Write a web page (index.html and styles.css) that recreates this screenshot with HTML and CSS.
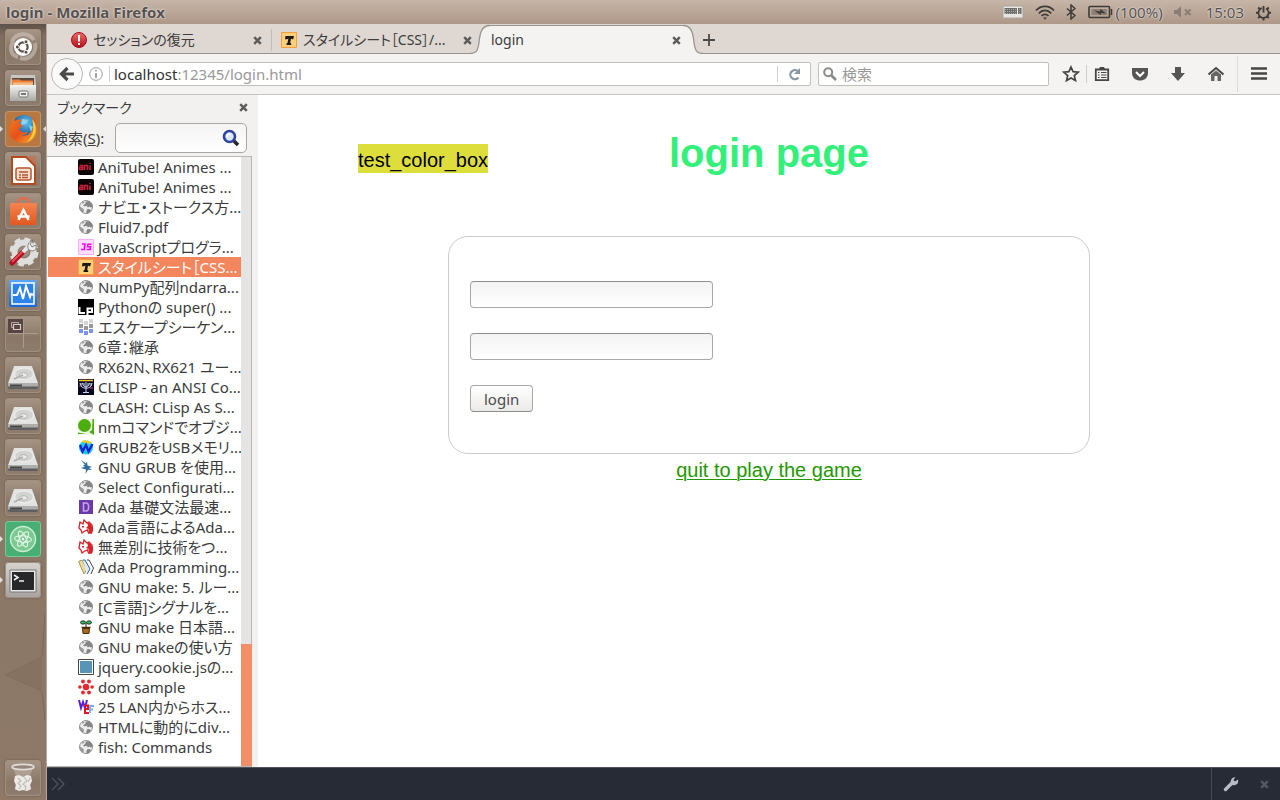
FILE: index.html
```
<!DOCTYPE html>
<html lang="ja">
<head>
<meta charset="utf-8">
<title>login</title>
<link rel="stylesheet" href="styles.css">
</head>
<body>
<svg class="defs" aria-hidden="true">
  <defs>
    <linearGradient id="g-red" x1="0" y1="0" x2="0" y2="1"><stop offset="0" stop-color="#f0706a"/><stop offset="1" stop-color="#b00c1c"/></linearGradient>
    <linearGradient id="g-metal" x1="0" y1="0" x2="0" y2="1"><stop offset="0" stop-color="#f4f4f2"/><stop offset="1" stop-color="#a9a8a5"/></linearGradient>
    <linearGradient id="g-blue" x1="0" y1="0" x2="0" y2="1"><stop offset="0" stop-color="#5aa5f5"/><stop offset="1" stop-color="#1667d8"/></linearGradient>
    <linearGradient id="g-fox" x1="0" y1="0" x2="1" y2="1"><stop offset="0" stop-color="#f07c1c"/><stop offset=".5" stop-color="#e8501c"/><stop offset="1" stop-color="#f7b32c"/></linearGradient>
    <radialGradient id="g-globe" cx=".6" cy=".3" r=".7"><stop offset="0" stop-color="#5cc3ee"/><stop offset="1" stop-color="#123a80"/></radialGradient>
    <linearGradient id="g-bag" x1="0" y1="0" x2="0" y2="1"><stop offset="0" stop-color="#f58450"/><stop offset="1" stop-color="#e2581f"/></linearGradient>
  </defs>
  <symbol id="globe" viewBox="0 0 16 16"><circle cx="8" cy="8" r="6.500" fill="#ededed" stroke="#909090"/><path d="M8 2.500l3-.5c2 1 3.500 3 3.700 5L13 8.800l-1.500-1.300L10 8.600 8.600 6.800 6.500 7.500 5 6.500l2-1.500z" fill="#858585"/><path d="M9.500 10l2.500.2 1 1.300-2.500 2.700-1.800.2-.4-2z" fill="#858585"/><path d="M1.600 7.500L3.500 8.500l2 1.500.5 2-1 2C3 13 1.500 10.500 1.600 7.500zM4 3.500l2-1 .5 1L4.500 5z" fill="#9a9a9a"/></symbol>
  <symbol id="ani" viewBox="0 0 16 16"><rect width="16" height="16" rx="2" fill="#0c0507"/><path d="M1.500 6.500h3v4h-3v-2h3M6.500 11V6.500h3V11M12 6.500V11M12 4v1" fill="none" stroke="#c8203c" stroke-width="1.600"/></symbol>
  <symbol id="js" viewBox="0 0 16 16"><path d="M.5.500h15v15H.500z" fill="#fdf" stroke="#f9aef9"/><path d="M4 5h3L6.200 10.500H3M13.500 5.200H10L9.600 7.800h3l-.5 2.700H8.600" fill="none" stroke="#f0f" stroke-width="1.600"/></symbol>
  <symbol id="tag" viewBox="0 0 16 16"><path d="M.5.500h15v15H.500z" fill="#ffd07a" stroke="#fb9d3d"/><path d="M4.500 4h8.500l-.8 3.200h-1L10 6.500 9.200 11l1 .5V13H5.500v-1.500l1-.5.900-4.500-1.400.7H4z" fill="#191714"/></symbol>
  <symbol id="lp" viewBox="0 0 16 16"><path d="M0 0h16v16H0z" fill="#000"/><path d="M1.500 8v6H7M9.500 16V9.500h4.500V13H9.500" fill="none" stroke="#fff" stroke-width="2"/></symbol>
  <symbol id="blocks" viewBox="0 0 16 16"><path d="M1 0h4v4H1zM6 2h4v4H6zM11 0h4v4h-4z" fill="#d4d4d4"/><path d="M1 5h4v4H1zM6 7h4v4H6zM11 5h4v4h-4z" fill="#999"/><path d="M1 10h4v4H1zM6 12h4v4H6zM11 10h4v4h-4z" fill="#7c92fb"/></symbol>
  <symbol id="clisp" viewBox="0 0 16 16"><path d="M0 0h16v16H0z" fill="#070720"/><path d="M1 1.500h14" stroke="#fc3" stroke-width="1.500"/><path d="M2 4c0 7 12 7 12 0M4.500 4c0 5 7 5 7 0M8 3v10M5 13.500h6" fill="none" stroke="#cdd6f4"/><path d="M3 4v3M6 4v3M10 4v3M13 4v3" stroke="#cdd6f4"/><path d="M1 7h2M12 9h3" stroke="#e04050"/></symbol>
  <symbol id="qiita" viewBox="0 0 16 16"><path d="M0 0h16v16H0z" fill="#eef8e5"/><circle cx="6.500" cy="6.500" r="6.500" fill="#4cae0e"/><path d="M14.500 0H16v16l-5-3 3-2zM0 13.500l8 1.500H0z" fill="#4cae0e"/></symbol>
  <symbol id="wglobe" viewBox="0 0 16 16"><circle cx="8" cy="8.500" r="7" fill="#19c7fb"/><path d="M3 3l3-2 5 1 3 1-3 2z" fill="#e6d22d"/><path d="M2 6l2.500 6.500L8 6l2.500 6.500L14.500 5" fill="none" stroke="#1620d0" stroke-width="2.200"/></symbol>
  <symbol id="bolt" viewBox="0 0 16 16"><path d="M3 1l5 3.500 1-2 .5 4L14 8l-3 1 3 2-4-.2L7.500 15 8 10.500 3 9l4-1.500L4.500 6 7 6z" fill="#2f6f9e"/></symbol>
  <symbol id="dpurple" viewBox="0 0 16 16"><path d="M1 1h14v14H1z" fill="#6a3aab"/><path d="M5.500 4v8H8c3.500 0 3.500-8 0-8z" fill="none" stroke="#c9a5ea" stroke-width="1.500"/></symbol>
  <symbol id="fox" viewBox="0 0 16 16"><path d="M2 3l3 2 1-4 3 3 2-1 3 3 .5 4-1 4h-3l-1-3-3.500 1.500L4 14l-1-3-2-2z" fill="#fff" stroke="#d8232a" stroke-width="1.300"/><path d="M9 3l4 2 2 5-1 4h-3l-.5-4-2.500-1 2-2z" fill="#d8232a"/><path d="M4 7h2v1.500H4z" fill="#d8232a"/></symbol>
  <symbol id="books" viewBox="0 0 16 16"><path d="M.5 2.500L4 1l5 9-3 5z" fill="#ead9a0" stroke="#a6945a"/><path d="M5 1h2l5 9-3 5" fill="#dceaff" stroke="#2b5fa8"/><path d="M9 1h2l4.500 8L13 15" fill="none" stroke="#3a4350"/></symbol>
  <symbol id="plant" viewBox="0 0 16 16"><path d="M4.500 9.500h7l-.5 5H5z" fill="#a86a1d" stroke="#4d2d08"/><path d="M3.500 8.500h9" stroke="#4d2d08" stroke-width="1.500"/><path d="M8 8V4" stroke="#222"/><ellipse cx="5" cy="3.500" rx="2.500" ry="1.600" fill="#24c853" stroke="#222"/><ellipse cx="11" cy="3.500" rx="2.500" ry="1.600" fill="#24c853" stroke="#222"/></symbol>
  <symbol id="square" viewBox="0 0 16 16"><path d="M.5.500h15v15H.500z" fill="#fff" stroke="#444"/><path d="M2 2h12v12H2z" fill="#5794b5"/></symbol>
  <symbol id="dots" viewBox="0 0 16 16"><g fill="#ef2529"><circle cx="8" cy="8" r="3.200"/><circle cx="5" cy="2.500" r="1.900"/><circle cx="11" cy="2.500" r="1.900"/><circle cx="1.900" cy="8" r="1.800"/><circle cx="14.100" cy="8" r="1.800"/><circle cx="5" cy="13.500" r="1.900"/><circle cx="11" cy="13.500" r="1.900"/></g></symbol>
  <symbol id="w2f" viewBox="0 0 16 16"><path d="M1 1l2 8 2-6 2 6 2-8" fill="none" stroke="#5a20d8" stroke-width="2"/><path d="M6 6.500h4V10H7v4h4" fill="none" stroke="#e3161f" stroke-width="2"/><path d="M12 14V7h4M12 10.500h3" fill="none" stroke="#86aef0" stroke-width="2"/></symbol>
  <symbol id="x" viewBox="0 0 10 10"><path d="M2 2l6 6M8 2L2 8" stroke="currentColor" stroke-width="2.300"/></symbol>
  <symbol id="drive" viewBox="0 0 36 36"><path d="M9 9h18l6 16v5q0 2-2 2H5q-2 0-2-2v-5z" fill="#5f5f61"/><path d="M9 9h18l6 17H3z" fill="#e2e2e0"/><path d="M3 26h30v3.500H3z" fill="#aeaeac"/><path d="M5 28.500h12" stroke="#444" stroke-width="2"/><ellipse cx="19" cy="17" rx="9.500" ry="6" fill="#d3d3d1" stroke="#f3f3f2"/><ellipse cx="18.500" cy="18" rx="4" ry="2.300" fill="#ececeb" stroke="#b3b3b1"/><path d="M9 22l9-4" stroke="#aeaeac" stroke-width="1.500"/></symbol>
</svg>

<header class="panel">
  <span class="panel-title">login - Mozilla Firefox</span>
  <div class="indicators">
    <svg width="22" height="14" viewBox="0 0 22 14"><path d="M1 1h20v12H1z" fill="#e6e5e2" stroke="#aaa49e"/><path d="M2.500 3h17v6h-17z" fill="#6e6e68"/><path d="M3 4.500h16M3 6.500h16M3 8.500h16" stroke="#aaa" stroke-dasharray="1 1"/><path d="M15.500 3v7" stroke="#eee"/></svg>
    <svg width="20" height="15" viewBox="0 0 20 15"><path d="M1 5.500c5-5.500 13-5.500 18 0M3.800 8.300c3.500-3.800 8.900-3.800 12.400 0M6.500 11c2-2.200 5-2.200 7 0" fill="none" stroke="#3f3b38" stroke-width="1.700"/><path d="M8 12.500h4L10 14.800z" fill="#3f3b38"/></svg>
    <svg class="bt" width="10" height="16" viewBox="0 0 10 16"><path d="M1 4.500l8 7L5 15V1l4 3.500-8 7" fill="none" stroke="#3f3b38" stroke-width="1.500"/></svg>
    <span class="battery"><svg width="25" height="14" viewBox="0 0 25 14"><rect x="1" y="1.500" width="20.500" height="11" rx="1" fill="none" stroke="#3f3b38" stroke-width="1.600"/><path d="M3.500 4h15.500v6H3.500z" fill="#8e8177"/><path d="M6 5.500l6 1 .5-2.500 5.500 4.500-5-.5-.5 2z" fill="#3f3b38"/><path d="M23.500 4v6" stroke="#3f3b38" stroke-width="1.500"/></svg>(100%)</span>
    <svg class="mute" width="18" height="12" viewBox="0 0 18 12"><path d="M0 4h3l4-4v12L3 8H0z" fill="#8a7d73"/><path d="M11 3.500l5.500 5.500M16.500 3.500L11 9" stroke="#8a7d73" stroke-width="2"/></svg>
    <span>15:03</span>
    <svg width="17" height="17" viewBox="0 0 17 17"><circle cx="8.500" cy="8.800" r="5" fill="none" stroke="#3f3b38" stroke-width="1.800" stroke-dasharray="26.400 5" transform="rotate(-61 8.500 8.800)"/><path d="M8.500 2v6.500M1 8.800h2.500M13.500 8.800H16M8.500 14v2.500M3.200 3.500l1.700 1.700M13.800 3.500l-1.700 1.700M3.200 14l1.700-1.700M13.800 14l-1.700-1.700" stroke="#3f3b38" stroke-width="1.900"/></svg>
  </div>
</header>

<div class="desktop">
  <nav class="launcher" aria-label="Launcher">
    <button class="tile" aria-label="Dash"><svg viewBox="0 0 36 36"><path d="M7 13C10 4 23 2 29 11M30 14c2 10-6 18-15 15M13 28C5 26 4 18 9 12" fill="none" stroke="#d5cbc2" stroke-width="4" opacity=".55"/><circle cx="18" cy="18" r="9" fill="#fff"/><circle cx="18" cy="18" r="4.600" fill="none" stroke="#5b4c40" stroke-width="2.200"/><g fill="#5b4c40" stroke="#fff"><circle cx="12.300" cy="18" r="2"/><circle cx="21" cy="12.800" r="2"/><circle cx="21" cy="23.200" r="2"/></g></svg></button>
    <button class="tile" aria-label="Files"><svg viewBox="0 0 36 36"><path d="M6 5h24l1 10H5z" fill="#c9c6c1"/><path d="M7 8h22v8H7z" fill="#5b4a40"/><path d="M7 9.500h8l1 1h12v6H7z" fill="#f1803a"/><path d="M8 12.500h20v4H8z" fill="#f8ba83"/><path d="M5 15h26v16H5z" fill="url(#g-metal)"/><rect x="14" y="21" width="9" height="6" rx="1" fill="#eee" stroke="#777"/><path d="M16 24h5" stroke="#777" stroke-width="2"/></svg></button>
    <button class="tile active" aria-label="Firefox"><svg viewBox="0 0 36 36"><circle cx="19" cy="16.500" r="12.500" fill="url(#g-globe)"/><path d="M17 8l6 1-2 4-5 1zM24 14l4 2-2 5z" fill="#8cd4f1"/><path d="M8 6l-1 5C1 19 5 31 17 32c11 1 17-9 14-20-1-3-3-5-5-6 3 4 3 7 2 10-1 6-6 10-11 8 3 0 5-1 6-3-4 1-8 0-9-3 1-2 3-2 4-3l-4-3 3-3c-3-1-6 0-7 1z" fill="url(#g-fox)"/><path d="M27 8c7 8 4 19-5 23 6-6 8-13 5-23z" fill="#ffd33c"/></svg></button>
    <button class="tile" aria-label="Impress"><svg viewBox="0 0 36 36"><path d="M7 5h14l9 9v18H7z" fill="#fff" stroke="#b34a1d" stroke-width="2"/><path d="M22 4h9v9z" fill="#c86e4b" opacity=".7"/><rect x="11" y="16" width="15" height="12" rx="2" fill="#f5ddd0" stroke="#b8562a" stroke-width="1.500"/><path d="M14 20h9M17 23h6M17 25.500h6M14 23h2M14 25.500h2" stroke="#b8562a" stroke-width="1.600"/></svg></button>
    <button class="tile" aria-label="Software"><svg viewBox="0 0 36 36"><path d="M13 14V9c0-5 11-5 11 0v5" fill="none" stroke="#e36b4a" stroke-width="2.500"/><path d="M5 10h27l-1 22H5z" fill="url(#g-bag)"/><path d="M13.500 27l5-10 5 10M12.500 23.500h12" fill="none" stroke="#fff" stroke-width="2.400"/></svg></button>
    <button class="tile" aria-label="Settings"><svg viewBox="0 0 36 36"><circle cx="19" cy="18" r="9.500" fill="none" stroke="#dededc" stroke-width="6"/><circle cx="19" cy="18" r="13" fill="none" stroke="#dededc" stroke-width="3" stroke-dasharray="6 4.210"/><circle cx="19" cy="18" r="5" fill="#9b9089"/><path d="M7 29l12-12" stroke="#b00f20" stroke-width="5" stroke-linecap="round"/><path d="M7 28l11-11" stroke="#ee4a52" stroke-width="2"/><path d="M18 18l7-7" stroke="#e8e8e8" stroke-width="4"/><path d="M28 6l-3 4 2 3 4-2c1 6-3 7-7 5-3-4 0-9 4-10z" fill="#eee" stroke="#666" stroke-width=".8"/></svg></button>
    <button class="tile" aria-label="System Monitor"><svg viewBox="0 0 36 36"><rect x="4" y="5" width="28" height="27" rx="2" fill="url(#g-blue)"/><path d="M7 8h22v21H7z" fill="#2b82ec" stroke="#fff" stroke-width="1.500"/><path d="M8 20h4l3-7 3 11 3-13 4 11 1-3 3 1" fill="none" stroke="#fff" stroke-width="2"/></svg></button>
    <button class="tile" aria-label="Workspaces"><svg viewBox="0 0 36 36"><path d="M3 3h15v14H3z" fill="#594441"/><path d="M18.500 3v29M3 17.500h30" stroke="#a99c90"/><path d="M6.500 6.500h7v5h-7z" fill="none" stroke="#b7aba5"/><path d="M8.500 8.500h7v5h-7z" fill="#594441" stroke="#d3cbc6" stroke-width="1.200"/></svg></button>
    <button class="tile" aria-label="Volume 1"><svg><use href="#drive"/></svg></button>
    <button class="tile" aria-label="Volume 2"><svg><use href="#drive"/></svg></button>
    <button class="tile" aria-label="Volume 3"><svg><use href="#drive"/></svg></button>
    <button class="tile" aria-label="Volume 4"><svg><use href="#drive"/></svg></button>
    <button class="tile atom" aria-label="Atom"><svg viewBox="0 0 36 36"><circle cx="18" cy="18" r="12.500" fill="#7cc891" stroke="#c9ecd2" stroke-width="1.500"/><g fill="none" stroke="#e2f6e6" stroke-width="1.100"><ellipse cx="18" cy="18" rx="3.200" ry="8.500" transform="rotate(-25 18 18)"/><ellipse cx="18" cy="18" rx="3.200" ry="8.500" transform="rotate(35 18 18)"/><ellipse cx="18" cy="18" rx="3.200" ry="8.500" transform="rotate(95 18 18)"/></g><circle cx="18" cy="18" r="1.200" fill="#fff"/></svg></button>
    <button class="tile term" aria-label="Terminal"><svg viewBox="0 0 36 36"><path d="M5 8h26v22H5z" fill="#e8e8e8" stroke="#777"/><path d="M7 10h22v18H7z" fill="#26282a"/><path d="M9 13l4 2.500L9 18M14 19h5" fill="none" stroke="#eee" stroke-width="1.600"/></svg></button>
    <svg class="fold" viewBox="0 0 40 110"><path d="M40 0l-3 44L1 62l36 16 3 30" fill="none" stroke="#7d685a"/><path d="M37 44L1 62l36 16z" fill="#857261"/></svg>
    <button class="tile trash" aria-label="Trash"><svg viewBox="0 0 36 36"><path d="M8 8l3 8-1 14h16l-1-14 3-8z" fill="#b7aaa0" opacity=".7"/><path d="M10 16l4-1 4 2 4-2 4 1 1 5-2 4 1 4-4 2-4-1-4 1-4-2 1-4-2-4z" fill="#eceae6"/><path d="M13 18l3 3-3 2 3 3-2 3M19 17l3 4-4 3 3 3-1 3M25 18l-2 4" fill="none" stroke="#bdb8b2" stroke-width="1.100"/><ellipse cx="18" cy="7" rx="11" ry="2.600" fill="#94867c" stroke="#e0dbd6" stroke-width="1.700"/></svg></button>
  </nav>

  <div class="window">
    <div class="tabs">
      <div class="tab"><svg width="16" height="16" viewBox="0 0 16 16"><circle cx="8" cy="8" r="7.500" fill="url(#g-red)" stroke="#a80f1f"/><path d="M8 3v6.500M8 11v2" stroke="#fff" stroke-width="2"/></svg><span class="tab-name">セッションの復元</span><button class="close" aria-label="Close tab"><svg><use href="#x"/></svg></button></div>
      <div class="tab second"><svg width="16" height="16"><use href="#tag"/></svg><span class="tab-name">スタイルシート［CSS］/...</span><button class="close" aria-label="Close tab"><svg><use href="#x"/></svg></button></div>
      <div class="tab-current">
        <svg width="20" height="30" viewBox="0 0 20 30"><path d="M0 30v-.5c7 0 8-4 9-11C10 8 12 1.500 20 1.500V30z" fill="#f4f3f1"/><path d="M0 29.500c7 0 8-4 9-11C10 8 12 1.500 20 1.500" fill="none" stroke="#979490" stroke-width="1.300"/></svg>
        <div class="tab-body"><span class="tab-name">login</span><button class="close" aria-label="Close tab"><svg><use href="#x"/></svg></button></div>
        <svg width="20" height="30" viewBox="0 0 20 30"><path d="M20 30v-.5c-7 0-8-4-9-11C10 8 8 1.500 0 1.500V30z" fill="#f4f3f1"/><path d="M20 29.500c-7 0-8-4-9-11C10 8 8 1.500 0 1.500" fill="none" stroke="#979490" stroke-width="1.300"/></svg>
      </div>
      <button class="new-tab" aria-label="New tab"><svg width="12" height="12" viewBox="0 0 12 12"><path d="M6 0v12M0 6h12" stroke="#4a4a48" stroke-width="1.800"/></svg></button>
    </div>

    <div class="toolbar">
      <button class="back" aria-label="Back"><svg width="16" height="16" viewBox="0 0 16 16"><path d="M8.500 2L2.500 8l6 6M2.500 8H15" fill="none" stroke="#4a4a48" stroke-width="3.200"/></svg></button>
      <div class="urlbar">
        <svg width="14" height="14" viewBox="0 0 14 14"><circle cx="7" cy="7" r="6.300" fill="none" stroke="#9b9b99"/><path d="M7 6v5M7 3v1.500" stroke="#888" stroke-width="1.500"/></svg>
        <div class="url"><b>localhost</b>:12345/login.html</div>
        <button class="reload" aria-label="Reload"><svg width="13" height="13" viewBox="0 0 13 13"><path d="M10.500 9.500A4.600 4.600 0 1 1 9.800 3" fill="none" stroke="#8797a6" stroke-width="2.200"/><path d="M12 0v6H6z" fill="#8797a6"/></svg></button>
      </div>
      <label class="searchbar"><svg width="14" height="14" viewBox="0 0 14 14"><circle cx="5.200" cy="5.200" r="4" fill="none" stroke="#8b8b89" stroke-width="2"/><path d="M8 8l5 5" stroke="#8b8b89" stroke-width="2.600"/></svg><input type="text" placeholder="検索" aria-label="検索"></label>
      <div class="tools">
        <button aria-label="Bookmark"><svg viewBox="0 0 18 18"><path d="M9 2l2.100 4.700 5.100.5-3.900 3.400 1.200 5L9 13l-4.500 2.600 1.200-5L1.800 7.200l5.100-.5z" fill="none" stroke="#464644" stroke-width="1.700"/></svg></button>
        <i class="rule"></i>
        <button aria-label="Bookmarks list"><svg viewBox="0 0 18 18"><path d="M2.800 4.500h12.400v10.700H2.800z" fill="#f4f3f1" stroke="#464644" stroke-width="1.800"/><path d="M6 4l1-2h4l1 2z" fill="#464644"/><path d="M5 7.500h1.500M8 7.500h5.500M5 10h1.500M8 10h5.500M5 12.500h1.500M8 12.500h5.500" stroke="#464644" stroke-width="1.200"/></svg></button>
        <button aria-label="Pocket"><svg viewBox="0 0 18 18"><path d="M1 3h16v5c0 10-16 10-16 0z" fill="#555553"/><path d="M5 7l4 4 4-4" fill="none" stroke="#fff" stroke-width="2"/></svg></button>
        <button aria-label="Downloads"><svg viewBox="0 0 18 18"><path d="M6 2h6v6h4l-7 8-7-8h4z" fill="#555553"/></svg></button>
        <button aria-label="Home"><svg viewBox="0 0 18 18"><path d="M1.500 9.500L9 3l7.500 6.500" fill="none" stroke="#464644" stroke-width="2"/><path d="M4 9.500L9 5.500l5 4V16h-3.500v-5h-3v5H4z" fill="#666664"/></svg></button>
        <i class="rule tall"></i>
        <button aria-label="Menu"><svg viewBox="0 0 18 18"><path d="M1 3.500h16M1 8.500h16M1 13.500h16" stroke="#464644" stroke-width="2.500"/></svg></button>
      </div>
    </div>

    <div class="main">
      <aside class="sidebar">
        <div class="side-head"><span>ブックマーク</span><button class="close" aria-label="Close sidebar"><svg><use href="#x"/></svg></button></div>
        <div class="side-search"><label for="find">検索(<u>S</u>):</label><span class="find"><input id="find" type="text"><svg width="18" height="18" viewBox="0 0 18 18"><path d="M11 11l5 5" stroke="#292724" stroke-width="3.500"/><circle cx="7.500" cy="7.500" r="5.500" fill="#dce8fa" stroke="#2f429f" stroke-width="2.600"/><path d="M5 8a3 3 0 0 1 3-3" fill="none" stroke="#fff" stroke-width="1.500"/></svg></span></div>
        <div class="list">
          <ul>
            <li><svg><use href="#ani"/></svg>AniTube! Animes ...</li>
            <li><svg><use href="#ani"/></svg>AniTube! Animes ...</li>
            <li><svg><use href="#globe"/></svg>ナビエ・ストークス方...</li>
            <li><svg><use href="#globe"/></svg>Fluid7.pdf</li>
            <li><svg><use href="#js"/></svg>JavaScriptプログラ...</li>
            <li class="selected"><svg><use href="#tag"/></svg>スタイルシート［CSS...</li>
            <li><svg><use href="#globe"/></svg>NumPy配列ndarra...</li>
            <li><svg><use href="#lp"/></svg>Pythonの super() ...</li>
            <li><svg><use href="#blocks"/></svg>エスケープシーケン...</li>
            <li><svg><use href="#globe"/></svg>6章：継承</li>
            <li><svg><use href="#globe"/></svg>RX62N、RX621 ユー...</li>
            <li><svg><use href="#clisp"/></svg>CLISP - an ANSI Co...</li>
            <li><svg><use href="#globe"/></svg>CLASH: CLisp As S...</li>
            <li><svg><use href="#qiita"/></svg>nmコマンドでオブジ...</li>
            <li><svg><use href="#wglobe"/></svg>GRUB2をUSBメモリ...</li>
            <li><svg><use href="#bolt"/></svg>GNU GRUB を使用...</li>
            <li><svg><use href="#globe"/></svg>Select Configurati...</li>
            <li><svg><use href="#dpurple"/></svg>Ada 基礎文法最速...</li>
            <li><svg><use href="#fox"/></svg>Ada言語によるAda...</li>
            <li><svg><use href="#fox"/></svg>無差別に技術をつ...</li>
            <li><svg><use href="#books"/></svg>Ada Programming...</li>
            <li><svg><use href="#globe"/></svg>GNU make: 5. ルー...</li>
            <li><svg><use href="#globe"/></svg>[C言語]シグナルを...</li>
            <li><svg><use href="#plant"/></svg>GNU make 日本語...</li>
            <li><svg><use href="#globe"/></svg>GNU makeの使い方</li>
            <li><svg><use href="#square"/></svg>jquery.cookie.jsの...</li>
            <li><svg><use href="#dots"/></svg>dom sample</li>
            <li><svg><use href="#w2f"/></svg>25 LAN内からホス...</li>
            <li><svg><use href="#globe"/></svg>HTMLに動的にdiv...</li>
            <li><svg><use href="#globe"/></svg>fish: Commands</li>
          </ul>
          <div class="scroll"><div class="thumb"></div></div>
        </div>
      </aside>

      <main class="page">
        <div class="page-head"><div><span class="color-box">test_color_box</span></div><h1>login page</h1></div>
        <form class="login">
          <input type="text" aria-label="User name">
          <input type="password" aria-label="Password">
          <button type="button">login</button>
        </form>
        <a class="quit" href="#">quit to play the game</a>
      </main>
    </div>

    <footer class="console">
      <svg width="14" height="14" viewBox="0 0 14 14"><path d="M1 1l6 6-6 6M7 1l6 6-6 6" fill="none" stroke="#50545d" stroke-width="1.200"/></svg>
      <div class="console-tools">
        <button aria-label="Developer tools"><svg width="16" height="16" viewBox="0 0 16 16"><path d="M2.500 13.500L9 7" stroke="#b9bdc3" stroke-width="3.400" stroke-linecap="round"/><path d="M12.500 1.200L10.500 4l1.500 1.500 3-2c1 4-2 6.500-5.500 5.500C6 6 8 1 12.500 1.200z" fill="#b9bdc3"/></svg></button>
        <button class="close" aria-label="Close toolbar"><svg><use href="#x"/></svg></button>
      </div>
    </footer>
  </div>
</div>
</body>
</html>
```
FILE: styles.css
```
* { box-sizing: border-box; }

body {
  margin: 0;
  height: 100vh;
  display: flex;
  flex-direction: column;
  overflow: hidden;
  background: #8b7867;
  color: #3c3c3c;
  font: 15px/20px "Noto Sans", "Noto Sans CJK JP", sans-serif;
  font-feature-settings: "palt";
}

button {
  padding: 0;
  border: 0;
  background: none;
  color: inherit;
  font: inherit;
}

svg { display: block; flex: none; }
.defs { position: absolute; width: 0; height: 0; }

/* Top panel */
.panel {
  flex: none;
  height: 24px;
  padding: 0 8px 0 6px;
  display: flex;
  align-items: center;
  justify-content: space-between;
  background: linear-gradient(#c6b6a9, #ae9888);
  color: #575250;
  text-shadow: 0 0 2px #e8e2dd, 0 0 2px #e8e2dd;
}
.panel-title { font-weight: bold; }
.indicators { display: flex; align-items: center; gap: 11px; }
.bt { margin-right: 1px; }
.battery { display: flex; align-items: center; gap: 2px; }
.mute { margin-right: 3px; }

.desktop { flex: 1; min-height: 0; display: flex; }

/* Launcher */
.launcher {
  flex: none;
  width: 47px;
  padding: 5px 4px 4px 5px;
  display: flex;
  flex-direction: column;
  gap: 5px;
  background: linear-gradient(#5e5047, #806e60 12px, #8b7867 500px, #8e7969);
  border-right: 1px solid #b9a698;
}
.tile {
  position: relative;
  flex: none;
  width: 36px;
  height: 36px;
  border-radius: 4px;
  background: linear-gradient(#a69586, #8a7768 60%, #8e7c6e);
  box-shadow: inset 0 0 0 1px #a0917f, 0 0 2px #5e5047;
}
.tile svg { width: 36px; height: 36px; }
.tile.active { background: #b9783f; box-shadow: inset 0 0 0 1px #c89465; }
.tile.atom { background: #48ae74; box-shadow: inset 0 0 0 1px #78c796; }
.tile.term { background: linear-gradient(#d6d2d0, #a8a3a0); }
.tile.active::before, .tile.active::after, .atom::before, .term::before {
  content: "";
  position: absolute;
  top: 15px;
  border: 3px solid transparent;
}
.tile.active::before, .atom::before, .term::before { left: -5px; border-left-color: #e5ded8; }
.tile.active::after { right: -5px; border-right-color: #e5ded8; }
.fold { width: 40px; height: 110px; margin-top: 10px; }
.trash { margin-top: auto; }

/* Browser */
.window { flex: 1; min-width: 0; display: flex; flex-direction: column; background: #f4f3f1; }
.tabs {
  flex: none;
  height: 30px;
  padding-left: 14px;
  display: flex;
  background: linear-gradient(#dfd7d1 29px, #979490 29px);
}
.tab {
  width: 210px;
  margin-bottom: 1px;
  padding: 3px 8px 0 10px;
  display: flex;
  align-items: center;
  gap: 6px;
}
.tab.second {
  width: 202px;
  margin-right: -3px;
  padding: 3px 0 0 10px;
  background: linear-gradient(#c4bcb6, #c4bcb6) no-repeat 0 5px / 1px 22px;
}
.tab-name { flex: 1; font-size: 14px; white-space: nowrap; }
.close { flex: none; width: 12px; height: 12px; display: grid; place-items: center; color: #5e5c5a; }
.close svg { width: 11px; height: 11px; }
.tab-current { display: flex; }
.tab-body {
  width: 193px;
  margin-top: 1px;
  padding: 0 1px;
  display: flex;
  align-items: center;
  background: #f4f3f1;
  border-top: 1px solid #979490;
}
.new-tab { padding: 2px 0 0; }

.toolbar {
  flex: none;
  height: 41px;
  padding: 0 12px 0 4px;
  display: flex;
  align-items: center;
  border-bottom: 1px solid #c6c3be;
}
.back {
  position: relative;
  z-index: 1;
  width: 32px;
  height: 32px;
  border: 1px solid #b9b7b4;
  border-radius: 50%;
  background: #fafafa;
  display: grid;
  place-items: center;
}
.urlbar {
  flex: 1;
  height: 24px;
  margin-left: -6px;
  padding-left: 11px;
  display: flex;
  align-items: center;
  gap: 6px;
  background: #fff;
  border: 1px solid #c2c0bd;
  border-radius: 2px;
}
.url { flex: 1; height: 16px; padding-left: 4px; line-height: 16px; border-left: 1px solid #d0d0d0; color: #999; }
.url b { font-weight: normal; color: #333; }
.reload { width: 33px; height: 16px; border-left: 1px solid #d0d0d0; display: grid; place-items: center; }
.searchbar {
  width: 231px;
  height: 24px;
  margin-left: 7px;
  padding-left: 4px;
  display: flex;
  align-items: center;
  gap: 5px;
  background: #fff;
  border: 1px solid #c2c0bd;
  border-radius: 2px;
}
.searchbar input { flex: 1; min-width: 0; padding: 0; border: 0; outline: 0; background: none; font: inherit; }
.searchbar input::placeholder { color: #999; }
.tools { margin-left: 13px; display: flex; align-items: center; gap: 20px; }
.tools svg { width: 18px; height: 18px; }
.rule { width: 1px; height: 18px; margin: 0 -14px; background: #d0cecb; }
.rule.tall { height: 36px; margin: 0 -8px; background: #dcdad7; }

.main { flex: 1; min-height: 0; display: flex; background: #fff; }
.sidebar {
  flex: none;
  width: 211px;
  display: flex;
  flex-direction: column;
  background: #f2f1f0;
}
.side-head { height: 25px; padding: 0 9px 0 10px; display: flex; align-items: center; justify-content: space-between; font-size: 14px; }
.side-search { height: 36px; padding: 0 11px 0 6px; display: flex; align-items: center; justify-content: space-between; }
.find {
  width: 132px;
  height: 30px;
  padding: 0 6px;
  display: flex;
  align-items: center;
  background: linear-gradient(#f4f4f4, #fff);
  border: 1px solid #a9a7a4;
  border-radius: 5px;
}
.find input { flex: 1; min-width: 0; border: 0; outline: 0; background: none; }
.list {
  flex: 1;
  min-height: 0;
  margin-right: 6px;
  display: flex;
  background: #fff;
  border: 1px solid #b9b6b2;
  border-width: 1px 1px 1px 0;
}
.list ul { flex: 1; min-width: 0; margin: 0; padding: 0 0 0 1px; list-style: none; }
.list li { height: 20px; padding-left: 30px; display: flex; align-items: center; gap: 4px; white-space: nowrap; }
.list li svg { width: 16px; height: 16px; }
.list .selected { background: #f3865c; color: #fff; }
.scroll { flex: none; width: 10px; display: flex; flex-direction: column; justify-content: flex-end; background: #e4e4e4; }
.thumb { height: 20%; margin-right: -1px; background: #f08f68; }

/* Web page */
.page {
  flex: 1;
  min-width: 0;
  padding-top: 35px;
  display: flex;
  flex-direction: column;
  align-items: center;
  color: #000;
  font: 20px/24px "Liberation Sans", Arial, sans-serif;
}
.page-head {
  align-self: stretch;
  padding-bottom: 60px;
  display: grid;
  grid-template-columns: 1fr auto 1fr;
  align-items: center;
}
.color-box { display: inline-block; margin: 11px 0 0 100px; padding: 4px 0 1px; background: #dddd3c; }
.page h1 { margin: 0; font-size: 40px; line-height: 46px; color: #33f07a; }
.login {
  width: 642px;
  max-width: 100%;
  padding: 44px 21px 41px;
  display: flex;
  flex-direction: column;
  align-items: flex-start;
  gap: 25px;
  border: 1px solid #ccc;
  border-radius: 20px;
}
.login input {
  width: 243px;
  height: 27px;
  background: linear-gradient(#f3f3f3, #fff);
  border: 1px solid #a9a9a7;
  border-top-color: #8e8e8c;
  border-radius: 4px;
}
.login button {
  height: 27px;
  padding: 0 13px;
  border: 1px solid #aaa8a5;
  border-bottom-color: #8e8c89;
  border-radius: 4px;
  background: linear-gradient(#fff, #ebeae8);
  color: #4c4c4c;
  font: 15px/20px "Noto Sans", sans-serif;
}
.quit { margin-top: 4px; color: #229900; text-decoration-thickness: 1px; text-underline-offset: 2px; }

/* Developer toolbar */
.console {
  flex: none;
  height: 33px;
  padding-left: 4px;
  display: flex;
  align-items: center;
  justify-content: space-between;
  background: #272b35;
  border-top: 1px solid #50545d;
}
.console-tools { height: 100%; padding: 0 10px 0 11px; display: flex; align-items: center; gap: 19px; border-left: 1px solid #454952; }
.console .close { color: #55585e; }
```
